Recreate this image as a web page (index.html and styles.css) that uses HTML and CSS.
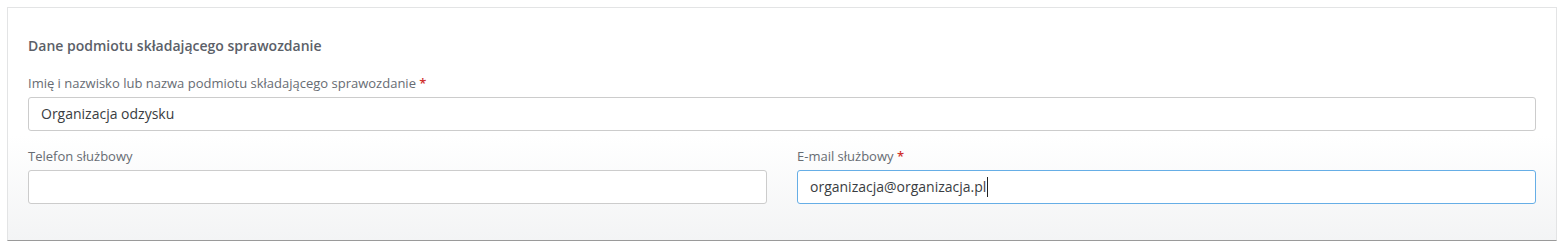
FILE: index.html
```html
<!DOCTYPE html>
<html lang="pl">
<head>
<meta charset="utf-8">
<title>Dane podmiotu</title>
<link rel="stylesheet" href="styles.css">
</head>
<body>
<section class="card">
  <h2 class="card-title">Dane podmiotu składającego sprawozdanie</h2>
  <div class="field field-full">
    <label class="label">Imię i nazwisko lub nazwa podmiotu składającego sprawozdanie <span class="req">*</span></label>
    <div class="input">Organizacja odzysku</div>
  </div>
  <div class="row">
    <div class="field">
      <label class="label">Telefon służbowy</label>
      <div class="input"></div>
    </div>
    <div class="field">
      <label class="label">E-mail służbowy <span class="req">*</span></label>
      <div class="input input-focus">organizacja@organizacja.pl<span class="caret"></span></div>
    </div>
  </div>
</section>
</body>
</html>
```
FILE: styles.css
```css
* { box-sizing: border-box; }
html, body { margin: 0; padding: 0; background: #ffffff; }
body {
  padding: 7px 6px 0 7px;
  font-family: "Open Sans", "Liberation Sans", sans-serif;
}
.card {
  border: 1px solid #e3e4e5;
  border-bottom: 1px solid #9a9a9a;
  background: linear-gradient(to bottom, #ffffff 0%, #ffffff 55%, #f3f4f5 100%);
  padding: 29px 20px 36px 20px;
  display: flex;
  flex-direction: column;
}
.card-title {
  margin: 0;
  font-size: 14px;
  line-height: 18px;
  font-weight: 600;
  color: #5b6068;
}
.field { display: flex; flex-direction: column; }
.field-full { margin-top: 19px; }
.label {
  font-size: 13px;
  line-height: 18px;
  color: #676c73;
  margin-bottom: 5px;
}
.req { color: #d0312d; font-weight: 600; }
.input {
  height: 34px;
  border: 1px solid #cccccc;
  border-radius: 3px;
  background: #ffffff;
  padding: 0 12px;
  font-size: 14px;
  line-height: 32px;
  color: #3a3d42;
  display: flex;
  align-items: center;
}
.input-focus { border-color: #66aee6; }
.caret {
  display: inline-block;
  width: 1px;
  height: 20px;
  background: #222;
  margin-left: 1px;
}
.row {
  display: grid;
  grid-template-columns: 1fr 1fr;
  column-gap: 30px;
  margin-top: 16px;
}
```
